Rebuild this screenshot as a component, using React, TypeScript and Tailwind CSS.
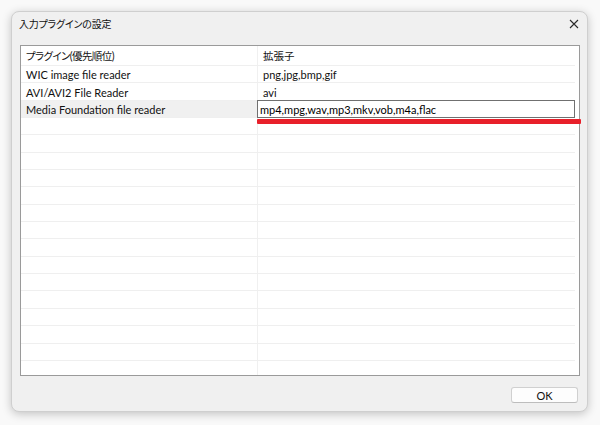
import React from "react";

const rows: [string, string][] = [
  ["WIC image file reader", "png,jpg,bmp,gif"],
  ["AVI/AVI2 File Reader", "avi"],
  ["Media Foundation file reader", "mp4,mpg,wav,mp3,mkv,vob,m4a,flac"],
];

const EMPTY = 16;

export default function App() {
  return (
    <div className="w-[600px] h-[425px] bg-[#f9f9f9] pt-[11px] pl-[11px] overflow-hidden font-['Lato','Noto_Sans_CJK_JP',sans-serif] text-[#000]">
      <div className="relative w-[577px] h-[401px] bg-[#f0f0f0] rounded-[8px] border border-[#cfcfcf] shadow-[0_2px_10px_rgba(0,0,0,0.22)] flex flex-col">
        {/* title bar */}
        <div className="h-[23px] flex items-center justify-between pl-[7px] pr-[6px] pt-[1px]">
          <span className="text-[10px] leading-none [font-feature-settings:'palt'] tracking-[-0.2px] text-[#111]">
            入力プラグインの設定
          </span>
          <svg width="10" height="10" viewBox="0 0 10 10" className="mr-[2px]">
            <path d="M1 1 L9 9 M9 1 L1 9" stroke="#2a2a2a" strokeWidth="1.1" fill="none" />
          </svg>
        </div>

        {/* table */}
        <div className="mt-[10px] ml-[8px] w-[560px] h-[331px] border border-[#9a9a9a] bg-white overflow-hidden">
          <div className="w-[554px]">
            {/* header */}
            <div className="flex h-[20px] border-b border-[#efefef]">
              <div className="w-[237px] border-r border-[#f0f0f0] pl-[5px] flex items-center pt-[2px] text-[10.5px] [font-feature-settings:'palt'] tracking-[-0.6px] text-[#111]">
                プラグイン(優先順位)
              </div>
              <div className="flex-1 pl-[5px] flex items-center pt-[2px] text-[10.5px] text-[#111]">
                拡張子
              </div>
            </div>
            {rows.map(([a, b], i) => {
              const sel = i === 2;
              return (
                <div key={a} className="flex h-[17.35px] border-b border-[#efefef] text-[11px] leading-none">
                  <div
                    className={
                      sel
                        ? "w-[237px] border-r border-[#f0f0f0] bg-[#f0f0f0] pl-[5px] pt-[1px] flex items-center text-[#111]"
                        : "w-[237px] border-r border-[#f0f0f0] pl-[5px] pt-[1px] flex items-center text-[#111]"
                    }
                  >
                    {a}
                  </div>
                  {sel ? (
                    <div className="flex-1 border border-[#707070] bg-white pl-[2px] pt-[1px] flex items-center -ml-[1px] -mt-[1px] h-[18.35px] text-black">
                      {b}
                    </div>
                  ) : (
                    <div className="flex-1 pl-[5px] pt-[1px] flex items-center text-[#111]">{b}</div>
                  )}
                </div>
              );
            })}
            {Array.from({ length: EMPTY }).map((_, i) => (
              <div key={i} className="flex h-[17.35px] border-b border-[#efefef]">
                <div className="w-[237px] border-r border-[#f0f0f0]" />
                <div className="flex-1" />
              </div>
            ))}
          </div>
        </div>

        {/* footer */}
        <div className="flex justify-end mt-[11px] pr-[9px]">
          <button className="w-[67px] h-[16px] bg-[#fdfdfd] border border-[#d0d0d0] border-b-[#bdbdbd] rounded-[3px] text-[11px] leading-none text-[#111] flex items-center justify-center">
            OK
          </button>
        </div>

        {/* red annotation underline */}
        <div className="absolute left-[245px] top-[107px] w-[324px] h-[5px] bg-[#e8202a] rounded-[1px]" />
      </div>
    </div>
  );
}
